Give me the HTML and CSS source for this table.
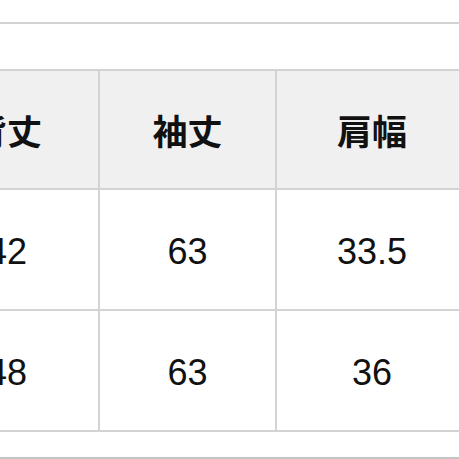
FILE: index.html
```html
<!DOCTYPE html>
<html lang="ja">
<head>
<meta charset="utf-8">
<link rel="stylesheet" href="styles.css">
</head>
<body>
<div class="top-rule"></div>
<div class="table-wrap">
<table class="size-table">
  <colgroup>
    <col class="c1"><col class="c2"><col class="c3">
  </colgroup>
  <thead>
    <tr><th>背丈</th><th>袖丈</th><th>肩幅</th></tr>
  </thead>
  <tbody>
    <tr><td>42</td><td>63</td><td>33.5</td></tr>
    <tr><td>48</td><td>63</td><td>36</td></tr>
  </tbody>
</table>
</div>
<div class="bottom-rule"></div>
</body>
</html>
```
FILE: styles.css
```css
html, body {
  margin: 0;
  padding: 0;
  background: #fff;
  overflow: hidden;
  width: 459px;
  height: 459px;
}
.top-rule {
  height: 22px;
  border-bottom: 2px solid #d3d3d3;
}
.table-wrap {
  margin-top: 45px;
  overflow: hidden;
  width: 459px;
}
.size-table {
  border-collapse: collapse;
  table-layout: fixed;
  margin-left: -86px;
  width: 553px;
}
.c1 { width: 184px; }
.c2 { width: 177px; }
.c3 { width: 192px; }
.size-table th,
.size-table td {
  border: 2px solid #d3d3d3;
  text-align: center;
  vertical-align: middle;
  padding: 0;
  color: #111;
}
.size-table th {
  background: #f0f0f0;
  height: 117px;
  font-family: "Noto Sans CJK JP", sans-serif;
  font-weight: 700;
  font-size: 35px;
}
.size-table td {
  height: 115px;
  font-family: "Liberation Sans", Arial, sans-serif;
  font-size: 36px;
  padding-top: 4px;
}
.bottom-rule {
  margin-top: 25px;
  border-top: 2px solid #c4c4c4;
}
```
